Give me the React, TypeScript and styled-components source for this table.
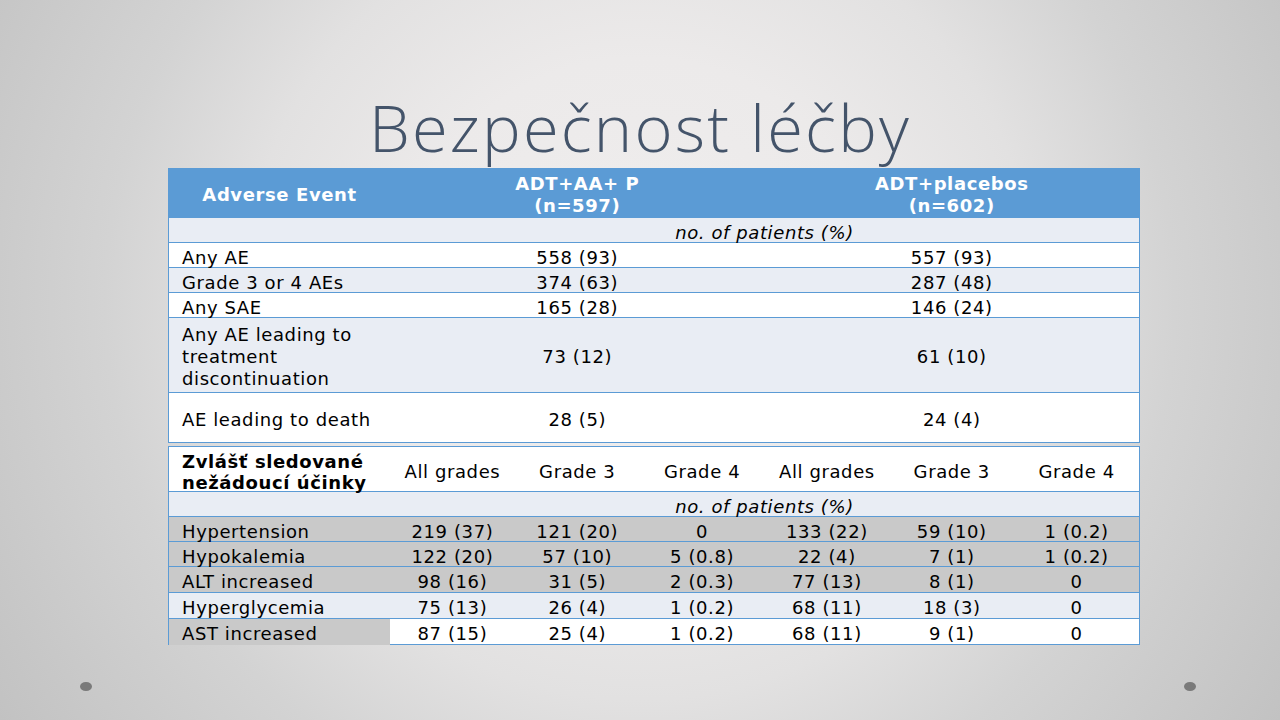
import React from "react";
import styled, { createGlobalStyle } from "styled-components";

const BLUE = "#5b9bd5";
const LIGHT = "#e9edf4";
const GRAY = "#c9c9c9";
const WHITE = "#ffffff";

const GlobalStyle = createGlobalStyle`
  html, body {
    margin: 0;
    padding: 0;
  }
  body {
    width: 1280px;
    height: 720px;
    overflow: hidden;
  }
`;

const Slide = styled.div`
  position: relative;
  width: 1280px;
  height: 720px;
  background: radial-gradient(
    circle at 50% 42%,
    #f0eeee 0%,
    #eceaea 32%,
    #e2e1e1 52%,
    #d3d3d3 70%,
    #c2c2c2 100%
  );
  display: flex;
  flex-direction: column;
  font-family: "DejaVu Sans", Verdana, sans-serif;
`;

const Title = styled.h1`
  margin: 0;
  padding-top: 87px;
  height: 81px;
  text-align: center;
  font-family: "Open Sans", "DejaVu Sans", sans-serif;
  font-weight: 300;
  font-size: 65px;
  line-height: 80px;
  color: #44546a;
  letter-spacing: 2.2px;
`;

const Table = styled.div`
  width: 972px;
  margin-left: 168px;
  box-sizing: border-box;
  border-left: 1px solid ${BLUE};
  border-right: 1px solid ${BLUE};
`;

const SecondTable = styled(Table)`
  margin-top: 3px;
  border-top: 1px solid ${BLUE};
`;

const Row = styled.div<{ $h: number; $bg: string }>`
  display: grid;
  grid-template-columns: 221px repeat(6, 1fr);
  height: ${(p) => p.$h}px;
  box-sizing: border-box;
  background: ${(p) => p.$bg};
  border-bottom: 1px solid ${BLUE};
`;

const HeaderRow = styled(Row)`
  border-top: 1px solid ${BLUE};
`;

const Cell = styled.div<{ $span?: number; $left?: boolean; $bg?: string }>`
  grid-column: span ${(p) => p.$span ?? 1};
  display: flex;
  align-items: center;
  justify-content: ${(p) => (p.$left ? "flex-start" : "center")};
  text-align: ${(p) => (p.$left ? "left" : "center")};
  padding-left: ${(p) => (p.$left ? "13px" : "0")};
  padding-top: 4px;
  background: ${(p) => p.$bg ?? "transparent"};
  font-size: 18px;
  letter-spacing: 0.6px;
  line-height: 22px;
  color: #000;
  white-space: nowrap;
`;

const HeadCell = styled(Cell)`
  color: #fff;
  font-weight: bold;
`;

const BoldLabel = styled(Cell)`
  font-weight: bold;
  line-height: 21px;
`;

const Note = styled(Cell)`
  font-style: italic;
`;

const Dot = styled.div<{ $side: "left" | "right" }>`
  position: absolute;
  top: 682px;
  ${(p) => (p.$side === "left" ? "left: 80px;" : "left: 1184px;")}
  width: 12px;
  height: 9px;
  border-radius: 50%;
  background: #7a7a7a;
`;

const summary = [
  { label: "Any AE", a: "558 (93)", b: "557 (93)", bg: WHITE },
  { label: "Grade 3 or 4 AEs", a: "374 (63)", b: "287 (48)", bg: LIGHT },
  { label: "Any SAE", a: "165 (28)", b: "146 (24)", bg: WHITE },
];

const events = [
  { label: "Hypertension", v: ["219 (37)", "121 (20)", "0", "133 (22)", "59 (10)", "1 (0.2)"], bg: GRAY, h: 25 },
  { label: "Hypokalemia", v: ["122 (20)", "57 (10)", "5 (0.8)", "22 (4)", "7 (1)", "1 (0.2)"], bg: GRAY, h: 25 },
  { label: "ALT increased", v: ["98 (16)", "31 (5)", "2 (0.3)", "77 (13)", "8 (1)", "0"], bg: GRAY, h: 26 },
  { label: "Hyperglycemia", v: ["75 (13)", "26 (4)", "1 (0.2)", "68 (11)", "18 (3)", "0"], bg: LIGHT, h: 26 },
];

export default function App() {
  return (
    <>
      <GlobalStyle />
      <Slide>
        <Title>Bezpečnost léčby</Title>

        <Table>
          <HeaderRow $h={50} $bg={BLUE}>
            <HeadCell>Adverse Event</HeadCell>
            <HeadCell $span={3}>
              ADT+AA+ P
              <br />
              (n=597)
            </HeadCell>
            <HeadCell $span={3}>
              ADT+placebos
              <br />
              (n=602)
            </HeadCell>
          </HeaderRow>
          <Row $h={25} $bg={LIGHT}>
            <Cell />
            <Note $span={6}>no. of patients (%)</Note>
          </Row>
          {summary.map((r) => (
            <Row key={r.label} $h={25} $bg={r.bg}>
              <Cell $left>{r.label}</Cell>
              <Cell $span={3}>{r.a}</Cell>
              <Cell $span={3}>{r.b}</Cell>
            </Row>
          ))}
          <Row $h={75} $bg={LIGHT}>
            <Cell $left>
              Any AE leading to
              <br />
              treatment
              <br />
              discontinuation
            </Cell>
            <Cell $span={3}>73 (12)</Cell>
            <Cell $span={3}>61 (10)</Cell>
          </Row>
          <Row $h={50} $bg={WHITE}>
            <Cell $left>AE leading to death</Cell>
            <Cell $span={3}>28 (5)</Cell>
            <Cell $span={3}>24 (4)</Cell>
          </Row>
        </Table>

        <SecondTable>
          <Row $h={45} $bg={WHITE}>
            <BoldLabel $left>
              Zvlášť sledované
              <br />
              nežádoucí účinky
            </BoldLabel>
            <Cell>All grades</Cell>
            <Cell>Grade 3</Cell>
            <Cell>Grade 4</Cell>
            <Cell>All grades</Cell>
            <Cell>Grade 3</Cell>
            <Cell>Grade 4</Cell>
          </Row>
          <Row $h={25} $bg={LIGHT}>
            <Cell />
            <Note $span={6}>no. of patients (%)</Note>
          </Row>
          {events.map((r) => (
            <Row key={r.label} $h={r.h} $bg={r.bg}>
              <Cell $left>{r.label}</Cell>
              {r.v.map((v, i) => (
                <Cell key={i}>{v}</Cell>
              ))}
            </Row>
          ))}
          <Row $h={26} $bg={WHITE}>
            <Cell $left $bg={GRAY}>
              AST increased
            </Cell>
            {["87 (15)", "25 (4)", "1 (0.2)", "68 (11)", "9 (1)", "0"].map((v, i) => (
              <Cell key={i}>{v}</Cell>
            ))}
          </Row>
        </SecondTable>

        <Dot $side="left" />
        <Dot $side="right" />
      </Slide>
    </>
  );
}
